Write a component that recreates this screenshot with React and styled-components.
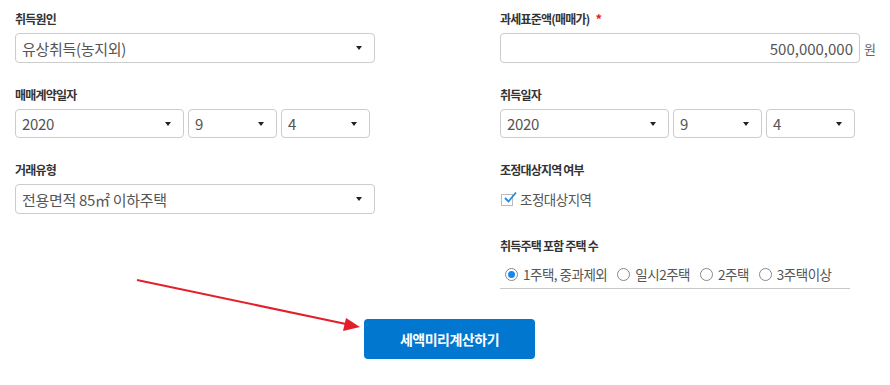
import React from "react";
import styled, { createGlobalStyle } from "styled-components";

const GlobalStyle = createGlobalStyle`
  body {
    margin: 0;
    background: #fff;
    font-family: "Noto Sans CJK KR", "Noto Sans", sans-serif;
  }
`;

const Page = styled.div`
  position: relative;
  width: 890px;
  height: 385px;
  padding: 10px 6px 0 15px;
  box-sizing: border-box;
`;

const Grid = styled.div`
  display: grid;
  grid-template-columns: 485px 1fr;
  row-gap: 23px;
`;

const Field = styled.div`
  display: flex;
  flex-direction: column;
  grid-column: ${props => props.col || "auto"};
`;

const Label = styled.div`
  font-size: 12px;
  font-weight: bold;
  line-height: 17px;
  letter-spacing: -0.8px;
  color: #333;
  margin-bottom: 6px;
  display: flex;
  align-items: center;
  gap: 6px;
`;

const Required = styled.span`
  color: #e5231f;
  font-size: 13px;
  letter-spacing: 0;
`;

const Select = styled.div`
  width: ${props => props.width || 360}px;
  height: ${props => props.height || 30}px;
  box-sizing: border-box;
  border: 1px solid #ccc;
  border-radius: 4px;
  display: flex;
  align-items: center;
  justify-content: space-between;
  padding: 0 12px 0 6px;
  font-size: 15px;
  color: #555;
  letter-spacing: -0.3px;
  &::after {
    content: "";
    border-left: 3.5px solid transparent;
    border-right: 3.5px solid transparent;
    border-top: 4px solid #222;
  }
`;

const DateRow = styled.div`
  display: flex;
  gap: 4px;
`;

const AmountRow = styled.div`
  display: flex;
  align-items: center;
  gap: 4px;
`;

const Input = styled.div`
  width: 360px;
  height: 30px;
  box-sizing: border-box;
  border: 1px solid #ccc;
  border-radius: 4px;
  display: flex;
  align-items: center;
  justify-content: flex-end;
  padding-right: 6px;
  font-size: 15px;
  color: #555;
`;

const Unit = styled.span`
  font-size: 13px;
  color: #666;
`;

const CheckRow = styled.label`
  height: 30px;
  display: flex;
  align-items: center;
  gap: 7px;
  padding-left: 1px;
  font-size: 13.5px;
  letter-spacing: -0.5px;
  color: #555;
`;

const CheckBox = styled.span`
  position: relative;
  width: 12px;
  height: 12px;
  box-sizing: border-box;
  border: 1px solid #bbb;
  margin-top: 1px;
`;

const CheckMark = styled.svg`
  position: absolute;
  left: 1px;
  top: -5px;
`;

const RadioRow = styled.div`
  width: 345px;
  height: 28px;
  border-bottom: 1px solid #c8c8c8;
  display: flex;
  align-items: center;
  padding-left: 5px;
  box-sizing: content-box;
  gap: 10px;
`;

const RadioItem = styled.label`
  display: flex;
  align-items: center;
  gap: 5px;
  font-size: 13.5px;
  letter-spacing: -0.5px;
  color: #555;
`;

const Radio = styled.span`
  width: 13px;
  height: 13px;
  box-sizing: border-box;
  border-radius: 50%;
  border: 1px solid #888;
  display: flex;
  align-items: center;
  justify-content: center;
  &::after {
    content: "";
    width: 7px;
    height: 7px;
    border-radius: 50%;
    background: ${props => (props.checked ? "#1787f0" : "transparent")};
  }
`;

const ButtonRow = styled.div`
  display: flex;
  justify-content: center;
  margin-top: 30px;
`;

const SubmitButton = styled.button`
  width: 171px;
  height: 40px;
  border: none;
  border-radius: 4px;
  background: #0277d0;
  color: #fff;
  font-family: inherit;
  font-size: 14px;
  font-weight: bold;
  letter-spacing: -0.5px;
  cursor: pointer;
`;

const Arrow = styled.svg`
  position: absolute;
  left: 0;
  top: 0;
  pointer-events: none;
`;

const DateSelects = ({ year, month, day }) => (
  <DateRow>
    <Select width={169} height={29}>{year}</Select>
    <Select width={89} height={29}>{month}</Select>
    <Select width={89} height={29}>{day}</Select>
  </DateRow>
);

const radios = ["1주택, 중과제외", "일시2주택", "2주택", "3주택이상"];

export default function App() {
  return (
    <Page>
      <GlobalStyle />
      <Grid>
        <Field>
          <Label>취득원인</Label>
          <Select>유상취득(농지외)</Select>
        </Field>
        <Field>
          <Label>
            과세표준액(매매가) <Required>*</Required>
          </Label>
          <AmountRow>
            <Input>500,000,000</Input>
            <Unit>원</Unit>
          </AmountRow>
        </Field>
        <Field>
          <Label>매매계약일자</Label>
          <DateSelects year="2020" month="9" day="4" />
        </Field>
        <Field>
          <Label>취득일자</Label>
          <DateSelects year="2020" month="9" day="4" />
        </Field>
        <Field>
          <Label>거래유형</Label>
          <Select>전용면적 85㎡ 이하주택</Select>
        </Field>
        <Field>
          <Label>조정대상지역 여부</Label>
          <CheckRow>
            <CheckBox>
              <CheckMark width="14" height="14" viewBox="0 0 14 14">
                <path d="M2 8 L5.5 11.5 L13 2.5" fill="none" stroke="#1e8be6" strokeWidth="1.8" />
              </CheckMark>
            </CheckBox>
            조정대상지역
          </CheckRow>
        </Field>
        <Field col="2">
          <Label>취득주택 포함 주택 수</Label>
          <RadioRow>
            {radios.map((r, i) => (
              <RadioItem key={r}>
                <Radio checked={i === 0} />
                {r}
              </RadioItem>
            ))}
          </RadioRow>
        </Field>
      </Grid>
      <ButtonRow>
        <SubmitButton>세액미리계산하기</SubmitButton>
      </ButtonRow>
      <Arrow width="890" height="385">
        <line x1="137" y1="280" x2="346" y2="324" stroke="#e3202a" strokeWidth="2" />
        <polygon points="360,327 343,331 346,318" fill="#e3202a" />
      </Arrow>
    </Page>
  );
}
